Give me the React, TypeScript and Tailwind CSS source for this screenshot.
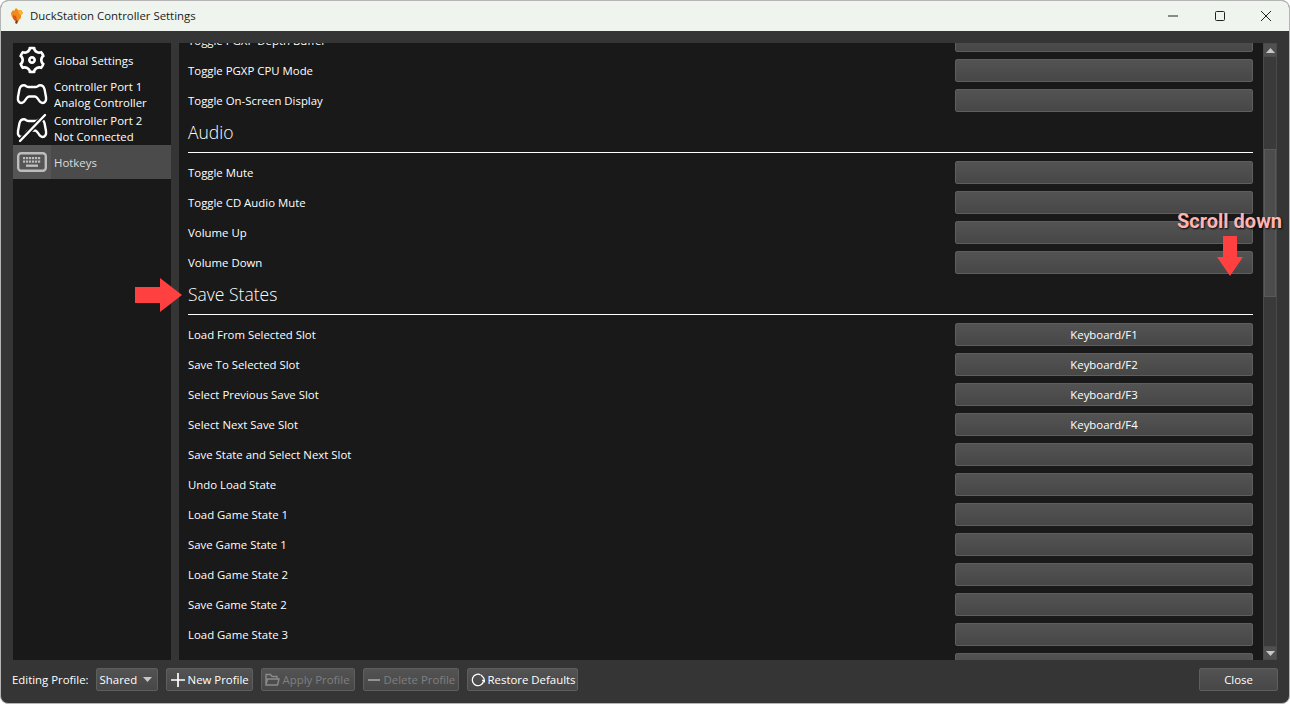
import { ReactNode } from "react";
import { RiSettings3Line } from "react-icons/ri";

type Row = { label: string; binding?: string } | { heading: string };

const rows: Row[] = [
  { label: "Toggle PGXP Depth Buffer" },
  { label: "Toggle PGXP CPU Mode" },
  { label: "Toggle On-Screen Display" },
  { heading: "Audio" },
  { label: "Toggle Mute" },
  { label: "Toggle CD Audio Mute" },
  { label: "Volume Up" },
  { label: "Volume Down" },
  { heading: "Save States" },
  { label: "Load From Selected Slot", binding: "Keyboard/F1" },
  { label: "Save To Selected Slot", binding: "Keyboard/F2" },
  { label: "Select Previous Save Slot", binding: "Keyboard/F3" },
  { label: "Select Next Save Slot", binding: "Keyboard/F4" },
  { label: "Save State and Select Next Slot" },
  { label: "Undo Load State" },
  { label: "Load Game State 1" },
  { label: "Save Game State 1" },
  { label: "Load Game State 2" },
  { label: "Save Game State 2" },
  { label: "Load Game State 3" },
  { label: "Save Game State 3" },
];

function PadIcon({ crossed }: { crossed?: boolean }) {
  return (
    <svg width="32" height="30" viewBox="0 0 32 30" fill="none" stroke="white" strokeWidth="2.400" strokeLinejoin="round" strokeLinecap="round">
      <path d="M8 6.300C5.500 6.300 4 8 3.400 10.500L2 18C1.400 21.500 3 24 5.500 24C7.500 24 8.500 22.500 10 20C11 18.500 11.500 17.500 13 17.500H19C20.500 17.500 21 18.500 22 20C23.500 22.500 24.500 24 26.500 24C29 24 30.600 21.500 30 18L28.600 10.500C28 8 26.500 6.300 24 6.300C22 6.300 21.500 8 19.500 8H12.500C10.500 8 10 6.300 8 6.300Z" />
      {crossed && (
        <>
          <path d="M4 28 29 2" stroke="#191919" strokeWidth="5" />
          <path d="M4 28 29 2" />
        </>
      )}
    </svg>
  );
}

function KeyboardIcon() {
  const keys = [6, 9, 12, 15, 18, 21];
  return (
    <svg width="30" height="20" viewBox="0 0 30 20" fill="none">
      <rect x="1.200" y="1.200" width="27.600" height="17.600" rx="3" stroke="#bdbdbd" strokeWidth="2.400" />
      <g fill="#bdbdbd">
        {keys.map((x) => (
          <rect key={x} x={x} y="5" width="2.200" height="2.200" />
        ))}
        {keys.map((x) => (
          <rect key={x} x={x} y="8.500" width="2.200" height="2.200" />
        ))}
        <rect x="9" y="12.500" width="12" height="2.400" />
      </g>
    </svg>
  );
}

function DuckLogo() {
  return (
    <svg width="14" height="16" viewBox="0 0 14 16">
      <path d="M1 5 3 2l1 1 2-3 2 2 3 0 2 3-2 2v3l-2 2-1 2-2-1-2-1-2-3-1-3z" fill="#f08a1d" />
      <path d="M8 2l3 0 2 3-2 2-2-1z" fill="#f9b233" />
      <path d="M3 7l3 1 1 4-2 1-2-3z" fill="#d9541e" />
      <path d="M6 12l2 1-1 3-2-1z" fill="#7a3b12" />
    </svg>
  );
}

function SidebarItem({ icon, lines, active }: { icon: ReactNode; lines: string[]; active?: boolean }) {
  return (
    <div className={`flex h-[34px] items-center ${active ? "bg-[#4b4b4b]" : ""}`}>
      <div className={`flex h-full w-[38px] items-center justify-center ${active ? "bg-[#555555]" : ""}`}>{icon}</div>
      <div className={`pl-[3px] pt-[2px] leading-[16px] ${active ? "text-[#dcdcdc]" : "text-white"}`}>
        {lines.map((l) => (
          <div key={l}>{l}</div>
        ))}
      </div>
    </div>
  );
}

function QtButton({ children, disabled, className }: { children?: ReactNode; disabled?: boolean; className?: string }) {
  return (
    <div
      className={`flex h-[23px] items-center rounded-[2px] border border-[#5e5e5e] bg-gradient-to-b from-[#535353] to-[#474747] ${
        disabled ? "text-[#7f7f7f]" : "text-white"
      } ${className ?? "justify-center"}`}
    >
      {children}
    </div>
  );
}

function Triangle({ down }: { down?: boolean }) {
  return (
    <svg width="9" height="5" viewBox="0 0 9 5">
      <path d={down ? "M0 0h9L4.500 5z" : "M0 5h9L4.500 0z"} fill="#c8c8c8" />
    </svg>
  );
}

export default function App() {
  return (
    <div
      className="relative flex h-[704px] w-[1290px] flex-col overflow-hidden bg-white text-[11.4px]"
      style={{ fontFamily: "'Open Sans', Roboto, sans-serif" }}
    >
      <div className="flex h-full flex-col overflow-hidden rounded-[8px] border border-[#b5b5b5] bg-[#353535]">
        {/* title bar */}
        <div className="flex h-[30px] shrink-0 items-center bg-[#eff4ef] pl-[9px] text-[#1b1b1b]">
          <DuckLogo />
          <span className="ml-[6px]">DuckStation Controller Settings</span>
          <div className="ml-auto flex items-center text-black">
            <svg width="46" height="30" viewBox="0 0 46 30">
              <path d="M17 15h10" stroke="#222" />
            </svg>
            <svg width="46" height="30" viewBox="0 0 46 30" fill="none">
              <rect x="18.500" y="10.500" width="9" height="9" rx="1" stroke="#222" />
            </svg>
            <svg width="46" height="30" viewBox="0 0 46 30">
              <path d="M18 10l10 10M28 10 18 20" stroke="#222" />
            </svg>
          </div>
        </div>

        {/* main area */}
        <div className="flex min-h-0 flex-1 pl-[12px] pr-[12px] pt-[12px]">
          <div className="w-[158px] shrink-0 bg-[#191919]">
            <SidebarItem icon={<RiSettings3Line size={32} color="white" />} lines={["Global Settings"]} />
            <SidebarItem icon={<PadIcon />} lines={["Controller Port 1", "Analog Controller"]} />
            <SidebarItem icon={<PadIcon crossed />} lines={["Controller Port 2", "Not Connected"]} />
            <SidebarItem icon={<KeyboardIcon />} lines={["Hotkeys"]} active />
          </div>
          <div className="ml-[8px] flex min-w-0 flex-1 bg-[#191919]">
            <div className="min-w-0 flex-1 overflow-hidden text-white">
              <div className="-mt-[14px] pl-[9px] pr-[10px]">
                {rows.map((r) =>
                  "heading" in r ? (
                    <div key={r.heading} className="h-[42px]">
                      <div className="flex h-[33px] items-start pt-[1px] text-[17.5px] font-light leading-[24px]">{r.heading}</div>
                      <div className="h-px bg-white" />
                    </div>
                  ) : (
                    <div key={r.label} className="flex h-[30px] items-start justify-between">
                      <div className="leading-[23px]">{r.label}</div>
                      <QtButton className="w-[298px] justify-center">{r.binding}</QtButton>
                    </div>
                  ),
                )}
              </div>
            </div>
            {/* scrollbar */}
            <div className="flex w-[14px] shrink-0 flex-col bg-[#353535]">
              <div className="flex h-[14px] items-center justify-center border border-[#4a4a4a] bg-[#505050]">
                <Triangle />
              </div>
              <div className="flex-1 border-x border-[#4a4a4a] bg-[#3a3a3a] pt-[92px]">
                <div className="h-[148px] border border-[#5a5a5a] bg-[#4c4c4c]" />
              </div>
              <div className="flex h-[14px] items-center justify-center border border-[#4a4a4a] bg-[#505050]">
                <Triangle down />
              </div>
            </div>
          </div>
        </div>

        {/* bottom bar */}
        <div className="flex h-[43px] shrink-0 items-start gap-[8px] pl-[11px] pr-[11px] pt-[8px] text-white">
          <span className="mr-[-1px] leading-[23px]">Editing Profile:</span>
          <QtButton className="w-[62px] justify-between pl-[3px] pr-[5px]">
            Shared
            <Triangle down />
          </QtButton>
          <QtButton className="w-[87px] justify-start gap-[3px] pl-[4px]">
            <svg width="14" height="14" viewBox="0 0 14 14">
              <path d="M7 0v14M0 7h14" stroke="white" strokeWidth="1.700" />
            </svg>
            New Profile
          </QtButton>
          <QtButton className="w-[94px] justify-start gap-[3px] pl-[3px]" disabled>
            <svg width="15" height="13" viewBox="0 0 15 13" fill="none" stroke="#8a8a8a" strokeWidth="1.400">
              <path d="M1 11V1.500h4.500l1.500 2h5V6M1 12l1.500-6h11.500l-1.500 6z" />
            </svg>
            Apply Profile
          </QtButton>
          <QtButton className="w-[96px] justify-start gap-[4px] pl-[4px]" disabled>
            <svg width="12" height="4" viewBox="0 0 12 4">
              <path d="M0 2h12" stroke="#a0a0a0" strokeWidth="1.700" />
            </svg>
            Delete Profile
          </QtButton>
          <QtButton className="w-[111px] justify-start gap-[3px] pl-[3px]">
            <svg width="14" height="14" viewBox="0 0 14 14" fill="none" stroke="white" strokeWidth="1.300">
              <path d="M12.500 8.500A5.700 5.700 0 1 1 9.500 1.800" />
              <path d="M10 1.800 12.800 5.200 13.600 8.800 11.200 7" strokeLinejoin="round" />
            </svg>
            Restore Defaults
          </QtButton>
          <QtButton className="ml-auto w-[79px] justify-center">Close</QtButton>
        </div>
      </div>

      {/* annotations drawn on top of the screenshot */}
      <svg className="absolute left-[135px] top-[278px]" width="47" height="34" viewBox="0 0 47 34">
        <path d="M0 9h25V0l22 17-22 17v-9H0z" fill="#ff4040" />
      </svg>
      <svg className="absolute left-[1217px] top-[236px]" width="26" height="40" viewBox="0 0 26 40">
        <path d="M6 0h14v21h6L13 40 0 21h6z" fill="#ff4040" />
      </svg>
      <div className="absolute left-[1177px] top-[209px] text-[20px] font-bold leading-[24px] text-[#ffb4b4] [text-shadow:1px_1px_2px_#000]" style={{ fontFamily: "Roboto, sans-serif" }}>
        Scroll down
      </div>
    </div>
  );
}
